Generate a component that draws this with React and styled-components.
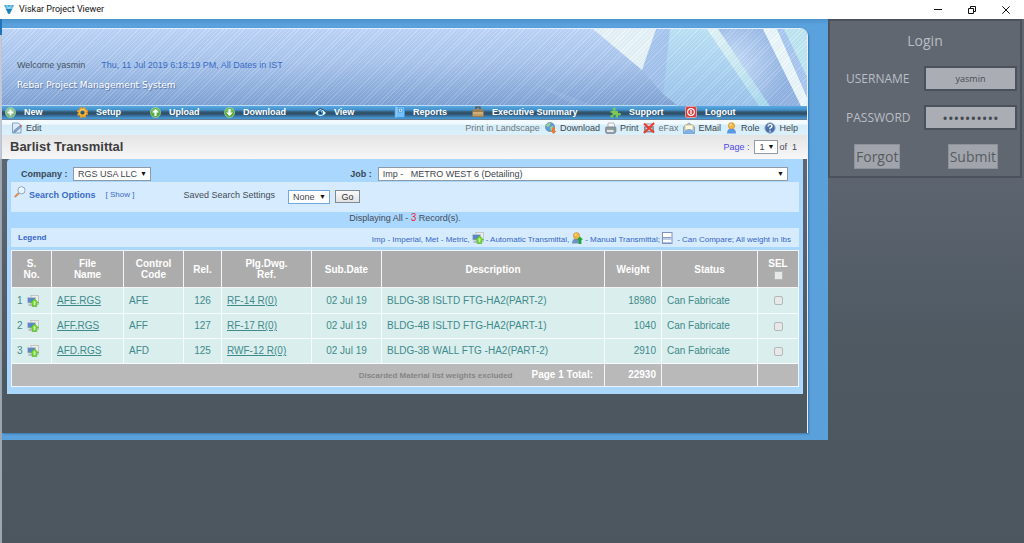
import React from "react";
import styled, { createGlobalStyle } from "styled-components";

const GlobalStyle = createGlobalStyle`
  * { box-sizing: border-box; }
  html, body { margin: 0; padding: 0; height: 100%; }
  #root { min-height: 100%; display: flex; flex-direction: column; }
  body { font-family: "Liberation Sans", Arial, sans-serif; font-size: 9px; color: #454b55; background: #4b575f; }
  button, input, select { font-family: inherit; font-size: inherit; margin: 0; }
  a { color: inherit; }
  svg { display: block; flex: none; }
`;

const TitleBar = styled.header`
  display: flex;
  align-items: center;
  height: 19px;
  padding: 0 9px 0 4px;
  background: #fff;
  color: #111;
  font-family: Roboto, "Open Sans", sans-serif;
  gap: 5px;
`;
const WindowTitle = styled.h1`
  flex: 1;
  margin: 0;
  font-size: 9px;
  font-weight: 400;
  line-height: 19px;
`;
const WindowButtons = styled.div`
  display: flex;
  gap: 22px;
  margin-right: 3px;
`;
const WindowButton = styled.button`
  border: 0;
  padding: 0;
  background: none;
  width: 12px;
  height: 16px;
  display: flex;
  align-items: center;
  justify-content: center;
`;

const Workspace = styled.div`
  flex: 1;
  display: flex;
  align-items: flex-start;
  background: linear-gradient(#5f6771 0, #5d6570 150px, #4e5962 330px, #4b565e 100%);
`;
const WindowEdge = styled.div`
  flex: none;
  align-self: stretch;
  width: 2px;
  background: linear-gradient(#1e74bb 0 16px, #c3cad6 16px 140px, #9ea6b2 140px);
`;
const Frame = styled.div`
  flex: 1;
  min-width: 0;
  padding: 9px 20px 7px 0;
  background: linear-gradient(#4c93cd, #5aa2dd 6px, #5aa0da);
`;
const Panel = styled.div`
  border-radius: 0 8px 0 0;
  overflow: hidden;
  border-right: 1px solid #e6eef8;
  background: linear-gradient(#5f6771 0, #5d6570 150px, #4c5760 350px);
  padding-bottom: 39px;
  box-shadow: 1px 1px 2px #3c78ab;
`;

const Banner = styled.div`
  position: relative;
  height: 77px;
  padding: 30px 15px 0;
  border-top: 1px solid #e3eefc;
  background: linear-gradient(#c0d6f8, #a9c5ec 45%, #80a3d4);
`;
const BannerArt = styled.svg`
  position: absolute;
  right: 0;
  top: 0;
`;
const BannerStripes = styled.div`
  position: absolute;
  inset: 0;
  background: repeating-linear-gradient(135deg, rgba(255, 255, 255, 0.14) 0 1px, rgba(90, 130, 190, 0.07) 1px 3px);
`;
const BannerText = styled.div`
  position: relative;
`;
const Welcome = styled.p`
  display: flex;
  gap: 16px;
  margin: 0;
  line-height: 12px;
  color: #4a5564;
`;
const ServerTime = styled.span`
  color: #3a6cc4;
`;
const Tagline = styled.p`
  margin: 8px 0 0;
  font-family: "DejaVu Sans", sans-serif;
  font-size: 9px;
  line-height: 12px;
  color: #fff;
  text-shadow: 1px 1px 1px #54719f;
`;

const Nav = styled.nav`
  display: grid;
  grid-template-columns: 72fr 73fr 74fr 91fr 79fr 78fr 138fr 75fr 122fr;
  align-items: center;
  height: 15px;
  padding-left: 3px;
  background: linear-gradient(#b9ddf8 0 1px, #5aa9e2 1px, #4290c9 5px, #34566f 7px, #2f4f68 9px, #3f87bd 12px, #4b9bd6);
  border-bottom: 1px solid #687f95;
`;
const NavLink = styled.a`
  display: flex;
  align-items: center;
  gap: 8px;
  color: #fff;
  font-weight: 700;
  line-height: 12px;
  text-decoration: none;
  white-space: nowrap;
`;

const Toolbar = styled.div`
  display: flex;
  align-items: center;
  height: 15px;
  padding: 0 9px;
  gap: 5px;
  color: #3c4650;
  background: linear-gradient(#f2fafd 0 4px, #d5edf8 5px, #dbf0fa);
`;
const ToolLink = styled.a`
  display: flex;
  align-items: center;
  gap: 3px;
  line-height: 12px;
  text-decoration: none;
  white-space: nowrap;
  color: ${(p) => (p.$muted ? "#6f7880" : "inherit")};
  margin-right: ${(p) => (p.$push ? "auto" : "0")};
`;

const PageHead = styled.div`
  display: flex;
  align-items: center;
  justify-content: space-between;
  height: 24px;
  padding: 0 10px 0 8px;
  background: linear-gradient(#e4e4e5, #f7f7f7);
`;
const PageTitle = styled.h2`
  margin: 0;
  font-size: 13px;
  line-height: 16px;
  color: #3d3d40;
`;
const Pager = styled.div`
  display: flex;
  align-items: center;
  gap: 1px;
`;
const PagerLabel = styled.label`
  margin-right: 4px;
  color: #4c4ae8;
`;

const Content = styled.main`
  margin: 0 4px 0 5px;
  padding: 1px 4px 7px;
  border-radius: 4px 0 0 0;
  background: #a9d7fe;
`;
const FilterRow = styled.div`
  display: flex;
  align-items: center;
  height: 22px;
  padding: 6px 11px 0 10px;
`;
const FilterLabel = styled.label`
  font-weight: 700;
  color: #3a4654;
  width: 52px;
  text-align: ${(p) => (p.$end ? "right" : "left")};
  margin-left: ${(p) => (p.$end ? "22%" : "0")};
  margin-right: ${(p) => (p.$end ? "6px" : "0")};
  white-space: nowrap;
`;
const SelectBox = styled.span`
  position: relative;
  display: ${(p) => (p.$fill ? "block" : "inline-block")};
  flex: ${(p) => (p.$fill ? "1" : "none")};
  width: ${(p) => (p.$width ? `${p.$width}px` : "auto")};
  &::after {
    content: "▼";
    position: absolute;
    right: 4px;
    top: 0;
    line-height: 13px;
    font-size: 7px;
    color: #111;
    pointer-events: none;
  }
`;
const Select = styled.select`
  appearance: none;
  display: block;
  width: 100%;
  height: 14px;
  padding: 0 12px 0 4px;
  border: 1px solid ${(p) => (p.$active ? "#6fa8dc" : "#8f9aa6")};
  border-radius: 0;
  background: #fff;
  color: #3f454c;
`;
const SearchBand = styled.div`
  display: flex;
  align-items: flex-start;
  min-height: 30px;
  padding: 4px 6px 4px 3px;
  background: #d6ebfe;
`;
const SearchTitle = styled.span`
  margin: 3px 0 0 3px;
  line-height: 12px;
  font-weight: 700;
  color: #3a6cc8;
`;
const ShowLink = styled.a`
  margin: 3px 0 0 10px;
  font-size: 8px;
  line-height: 12px;
  text-decoration: none;
  color: #3a6cc8;
`;
const SavedLabel = styled.label`
  margin: 3px 13px 0 49px;
  line-height: 12px;
`;
const SavedControls = styled.div`
  display: flex;
  gap: 5px;
  padding-top: 4px;
`;
const GoButton = styled.button`
  width: 25px;
  height: 13px;
  padding: 0;
  font-size: 9px;
  line-height: 10px;
  border: 1px solid #808a94;
  background: linear-gradient(#fafafa, #e2e2e2);
  color: #333;
`;
const RecordCount = styled.p`
  margin: 0;
  text-align: center;
  line-height: 11px;
  padding-bottom: 4px;
`;
const Count = styled.span`
  color: #f01f35;
  font-size: 10px;
`;
const Legend = styled.div`
  display: flex;
  align-items: center;
  justify-content: space-between;
  min-height: 19px;
  padding: 0 8px 0 7px;
  margin-bottom: 3px;
  font-size: 8px;
  color: #3565c5;
  background: #d6ebfe;
`;
const LegendKeys = styled.span`
  display: flex;
  align-items: center;
  gap: 2px;
  span { padding-top: 4px; }
`;

const Table = styled.table`
  width: 100%;
  table-layout: fixed;
  border-collapse: separate;
  border-spacing: 0;
  border: 1px solid #eef6fb;
  border-right-width: 0;
  font-size: 10px;
  color: #3f8a8b;
  background: #d9eeed;
`;
const Col = styled.col`
  width: ${(p) => (p.$w ? `${p.$w}px` : "auto")};
`;
const HeadCell = styled.th`
  height: 37px;
  padding: 0 4px;
  line-height: 11px;
  color: #fff;
  background: #acacac;
  border-right: 1px solid #f4f6f6;
  border-bottom: 1px solid #f4f6f6;
`;
const Cell = styled.td`
  height: ${(p) => (p.$short ? 25 : 26)}px;
  padding: 0 ${(p) => (p.$align === "center" ? 0 : 5)}px;
  line-height: 12px;
  text-align: ${(p) => p.$align || "left"};
  white-space: nowrap;
  border-right: 1px solid #f6fbfb;
  border-bottom: 1px solid #f6fbfb;
`;
const Numbered = styled.span`
  display: flex;
  align-items: flex-end;
  gap: 4px;
`;
const TotalCell = styled.td`
  height: 22px;
  padding: 0 ${(p) => (p.$label ? 11 : 5)}px;
  line-height: 12px;
  text-align: right;
  font-weight: 700;
  color: #fff;
  background: #b9b9b9;
  border-right: 1px solid #f4f6f6;
`;
const Note = styled.small`
  margin-right: 19px;
  font-size: 8px;
  color: #858585;
`;
const Check = styled.input`
  appearance: none;
  display: inline-block;
  vertical-align: middle;
  width: 9px;
  height: 9px;
  margin: 0;
  border: 1px solid #b3b8b8;
  border-radius: ${(p) => (p.$square ? 0 : 2)}px;
  background: #e8e8e8;
`;
const SelLabel = styled.label`
  display: flex;
  flex-direction: column;
  align-items: center;
  gap: 2px;
`;

const LoginBox = styled.form`
  flex: none;
  width: 194px;
  margin: 0 2px 0 0;
  padding: 10px 3px 7px 16px;
  border: 2px solid #4b525b;
  background: #606771;
  color: #b9bdc4;
  font-family: "Open Sans", "Noto Sans", sans-serif;
`;
const LoginTitle = styled.h2`
  margin: 0 13px 15px 0;
  text-align: center;
  font-size: 14px;
  font-weight: 400;
  line-height: 20px;
`;
const Field = styled.div`
  display: flex;
  align-items: center;
  justify-content: space-between;
  margin-bottom: 14px;
`;
const FieldLabel = styled.label`
  font-size: 12px;
  line-height: 16px;
`;
const TextBox = styled.input`
  width: 93px;
  height: 25px;
  padding: 0;
  border: 2px solid #4b525b;
  border-radius: 0;
  text-align: center;
  font-size: ${(p) => (p.type === "password" ? 15 : 9)}px;
  color: #464b52;
  background: #aaaeb4;
`;
const LoginActions = styled.div`
  display: flex;
  justify-content: space-between;
  padding: 0 19px 0 8px;
`;
const LoginButton = styled.button`
  height: 25px;
  padding: 0 1px;
  border: 1px solid #8d9199;
  font-size: 14px;
  line-height: 20px;
  color: #565b62;
  background: #a1a5ab;
`;

const Logo = () => (
  <svg width="10" height="10" viewBox="0 0 10 10" aria-hidden="true">
    <path d="M0 0h10L6 9H4z" fill="#4aaedb" />
    <path d="M2.500 0 5 3.500 7.500 0M1.200 3h7.600" fill="none" stroke="#d9f1fa" strokeWidth=".6" />
    <path d="M2 4h6L5 9z" fill="#1c7db8" />
  </svg>
);

const Orb = ({ children, color = "#4eae35" }) => (
  <svg width="11" height="11" viewBox="0 0 11 11" aria-hidden="true">
    <circle cx="5.500" cy="5.500" r="5" fill={color} stroke="#b9deb6" strokeWidth=".7" />
    <path d="M1.500 4a4.300 4.300 0 0 1 8 0q-4 2-8 0" fill="#fff" opacity=".25" />
    {children}
  </svg>
);

const navIcons = {
  New: (
    <Orb color="#78b77b"><path d="M5.500 2.500v6M2.500 5.500h6" stroke="#fff" strokeWidth="1.800" /></Orb>
  ),
  Setup: (
    <svg width="11" height="11" viewBox="0 0 11 11" aria-hidden="true">
      <circle cx="5.500" cy="5.500" r="4.400" fill="none" stroke="#f59a1b" strokeWidth="2.200" strokeDasharray="2.300 1.155" />
      <circle cx="5.500" cy="5.500" r="3.100" fill="none" stroke="#fbb52c" strokeWidth="1.900" />
      <path d="M3 4a3 3 0 0 1 4-1" fill="none" stroke="#ffe27a" strokeWidth=".8" />
    </svg>
  ),
  Upload: (
    <Orb><path d="M5.500 2 9 5.500H6.600V9H4.400V5.500H2z" fill="#fff" /></Orb>
  ),
  Download: (
    <Orb><path d="M5.500 9 2 5.500h2.400V2h2.200v3.500H9z" fill="#fff" /></Orb>
  ),
  View: (
    <svg width="11" height="11" viewBox="0 0 11 11" aria-hidden="true">
      <path d="M0 6q2.500-4 5.500-4T11 6Q8.500 9.300 5.500 9.300T0 6z" fill="#f3f7fa" />
      <path d="M0 5.500Q2.500 1.800 5.500 1.800T11 5.500" fill="none" stroke="#263b50" strokeWidth=".9" />
      <circle cx="5.500" cy="5.700" r="2.600" fill="#268ee0" />
      <circle cx="5.500" cy="5.700" r="1.200" fill="#102b48" />
      <circle cx="6.300" cy="4.800" r=".6" fill="#fff" />
    </svg>
  ),
  Reports: (
    <svg width="11" height="12" viewBox="0 0 11 12" aria-hidden="true">
      <rect x="1" y=".5" width="9.500" height="11" rx="1" fill="#74bff8" stroke="#3f97e0" />
      <path d="M2 .500v11" stroke="#c6e5ff" strokeDasharray="1 1" />
      <rect x="4.500" y="2.500" width="4" height="3.500" fill="#c7e7ff" stroke="#3f8fce" strokeWidth=".6" />
      <circle cx="6.500" cy="4.200" r=".8" fill="#3480c0" />
    </svg>
  ),
  "Executive Summary": (
    <svg width="12" height="12" viewBox="0 0 12 12" aria-hidden="true">
      <path d="M4 3V1h4v2" fill="none" stroke="#5b4a38" strokeWidth="1.200" />
      <path d="M1.500 3h9l1 3H.5z" fill="#9b805b" />
      <rect x=".5" y="5" width="11" height="6" rx=".8" fill="#c09a62" />
      <path d="M.5 5.500h11M.5 10.500h11" stroke="#806441" strokeWidth=".6" />
      <path d="M1 7h10" stroke="#e0c28f" />
    </svg>
  ),
  Support: (
    <svg width="11" height="11" viewBox="0 0 11 11" aria-hidden="true">
      <path d="M.5 4h3C2 1.500 3 .5 4.200.5S6.500 1.600 5.200 4H8v2.200C10 5 10.800 6 10.800 7.200S9.700 9 8 8v2.500H5.700C6.500 8.500 5.500 8 4.500 8S3 9 3.500 10.500h-3V8c2 .7 2-.2 2-1s-.5-1.500-2-1z" fill="#7bca50" />
    </svg>
  ),
  Logout: (
    <svg width="12" height="12" viewBox="0 0 12 12" aria-hidden="true">
      <rect x=".5" y=".5" width="11" height="11" rx="1.500" fill="#da3b3c" stroke="#f0b0ae" strokeWidth=".8" />
      <circle cx="6" cy="6" r="3.300" fill="none" stroke="#fff" strokeWidth="1.200" />
      <path d="M6 4v4" stroke="#fff" strokeWidth="1.300" />
    </svg>
  ),
};

const EditIcon = () => (
  <svg width="12" height="12" viewBox="0 0 12 12" aria-hidden="true">
    <path d="M1.500 1h6L10 3.500V11H1.500z" fill="#dceaf8" stroke="#6f8fb6" strokeWidth=".8" />
    <path d="M3 8.500 8.500 4l1.300 1.300L5 9.700l-2.300.8z" fill="#8eaacc" stroke="#47668e" strokeWidth=".5" />
    <path d="m8.500 3.500 1.300-1L11 4 9.800 5.200z" fill="#d75f52" />
  </svg>
);
const GlobeIcon = () => (
  <svg width="12" height="12" viewBox="0 0 12 12" aria-hidden="true">
    <circle cx="5" cy="5" r="4.600" fill="#5e9ed7" stroke="#56748f" strokeWidth=".5" />
    <path d="M2 2q2-1.500 3.500-1L5 3 3 5 1 4zM5 5l3-1 .5 3L6 9z" fill="#a3d18a" />
    <path d="M7 5.500h3V9h1.500l-3 3L5.700 9H7z" fill="#ee7838" />
  </svg>
);
const PrinterIcon = () => (
  <svg width="12" height="12" viewBox="0 0 12 12" aria-hidden="true">
    <path d="M3 1h6l1 4H3z" fill="#f4f5f7" stroke="#8c939b" strokeWidth=".6" />
    <path d="M1 5h9.500l.5 1v4L9.500 11.500h-8L.5 10V6z" fill="#949ca6" stroke="#606974" strokeWidth=".5" />
    <path d="M2 8h6.500v2H2z" fill="#e5e9ec" />
    <circle cx="8.800" cy="7" r=".8" fill="#55b743" />
  </svg>
);
const FaxIcon = () => (
  <svg width="12" height="12" viewBox="0 0 13 12" aria-hidden="true">
    <path d="M3 1h7v3h2v7H1V4h2z" fill="#8a9097" />
    <path d="M4 2h5v2H4zM3 6h7v3H3z" fill="#d7dde2" />
    <path d="m1 1 11 10M12 .500 1 11.500" stroke="#ee3a30" strokeWidth="2.200" />
  </svg>
);
const MailIcon = () => (
  <svg width="12" height="12" viewBox="0 0 12 12" aria-hidden="true">
    <path d="M.5 5 6 1l5.500 4v6.500H.5z" fill="#a9cdf1" stroke="#6490c4" strokeWidth=".7" />
    <path d="M2 3h8v4.500L6 9 2 7.500z" fill="#fff8dc" stroke="#d4a653" strokeWidth=".6" />
    <path d="m.7 11 4-3.500h2.600l4 3.500" fill="#82b2e8" stroke="#6290c6" strokeWidth=".6" />
  </svg>
);
const UserIcon = ({ arrow }) => (
  <svg width="12" height="12" viewBox="0 0 12 12" aria-hidden="true">
    <path d="M1 11.500q0-5 4.500-5t4.500 5z" fill={arrow ? "#6c93c6" : "#5c97df"} />
    <circle cx="5.500" cy="3.800" r="3.200" fill="#f3b647" stroke="#c58529" strokeWidth=".5" />
    <circle cx="4.600" cy="2.800" r="1" fill="#ffe4a4" />
    {arrow && <path d="m9 4.500 3 3.300h-1.600V12H7.700V7.800H6z" fill="#22a52c" />}
  </svg>
);
const HelpIcon = () => (
  <svg width="12" height="12" viewBox="0 0 12 12" aria-hidden="true">
    <circle cx="6" cy="6" r="5.200" fill="#486fac" stroke="#a5b5cb" />
    <path d="M4 4.500Q4 2.700 6 2.700t2 1.700Q8 5.300 6 6.200v1.100M6 8.400v1.300" fill="none" stroke="#fff" strokeWidth="1.300" />
  </svg>
);
const SearchIcon = () => (
  <svg width="12" height="12" viewBox="0 0 12 12" aria-hidden="true">
    <path d="m5 7-4.300 4" stroke="#d88b51" strokeWidth="1.800" />
    <circle cx="7.500" cy="4.300" r="3.600" fill="#e9f6ff" stroke="#829fc0" strokeWidth=".9" />
    <path d="M5.500 4q.3-2 2.200-2" fill="none" stroke="#fff" />
  </svg>
);
const AutoIcon = () => (
  <svg width="12" height="12" viewBox="0 0 12 12" aria-hidden="true">
    <path d="M3.500.5h8v9H9z" fill="#ededeb" stroke="#b4b8b8" strokeWidth=".7" />
    <path d="M.5 2.500h8v5.500h-8z" fill="#5c86cb" stroke="#c2c9cc" strokeWidth=".8" />
    <path d="M1.500 10h5" stroke="#a5adb0" strokeWidth="1.400" />
    <path d="M7.500 3.800 11.700 8H9.800v3.500H5.200V8H3.300z" fill="#6fd632" stroke="#55ad33" strokeWidth=".6" />
    <path d="M7.500 5.800 9 7.500H8.300v2.500H6.700V7.500H6z" fill="#c9f59d" />
  </svg>
);
const CompareIcon = () => (
  <svg width="11" height="12" viewBox="0 0 11 12" aria-hidden="true">
    <rect x=".5" y=".5" width="9.500" height="11" fill="#fff" stroke="#7d92bd" />
    <path d="M1 5.500h8.500M1 7h8.500" stroke="#849cc8" />
    <path d="M1 10.500h8.500" stroke="#a9c2e8" />
  </svg>
);

const BannerDrawing = () => (
  <BannerArt width="287" height="77" viewBox="-60 0 287 77" aria-hidden="true">
    <defs>
      <linearGradient id="sky" x1="0" y1="0" x2="0" y2="1">
        <stop offset="0" stopColor="#bfe5f6" />
        <stop offset="1" stopColor="#9cc4ec" />
      </linearGradient>
      <radialGradient id="glow" cx=".15" cy=".45" r=".7">
        <stop offset="0" stopColor="#cbe0fa" />
        <stop offset="1" stopColor="#93b4e2" />
      </radialGradient>
      <linearGradient id="ray" x1="0" y1="0" x2="1" y2="1">
        <stop offset="0" stopColor="#e8f7f6" />
        <stop offset=".5" stopColor="#ccebf3" />
        <stop offset="1" stopColor="#a8d9ee" />
      </linearGradient>
    </defs>
    <path d="M-50 52-4 77H15z" fill="#a8c6ec" opacity=".25" />
    <path d="M90 0h38l52 77H98L83 65z" fill="url(#sky)" />
    <path d="M76 0h14l-7 65-21-24z" fill="#a5c4ee" opacity=".8" />
    <path d="M13 0h63L62 41z" fill="#eaf6f8" />
    <path d="M138 0h45l38 77h-31z" fill="url(#glow)" />
    <path d="M127 0h11l52 77h-11z" fill="url(#ray)" />
    <path d="M183 0h14l30 68v9h-6z" fill="#eef9fb" />
    <path d="M197 0h7l23 48v20z" fill="#aac8f0" />
    <path d="M204 0h23v48z" fill="#c1e8f1" />
  </BannerArt>
);

const tools = [
  ["Download", <GlobeIcon />],
  ["Print", <PrinterIcon />],
  ["eFax", <FaxIcon />],
  ["EMail", <MailIcon />],
  ["Role", <UserIcon />],
  ["Help", <HelpIcon />],
];

const rows = [
  { file: "AFE.RGS", code: "AFE", rel: "126", ref: "RF-14 R(0)", date: "02 Jul 19", text: "BLDG-3B ISLTD FTG-HA2(PART-2)", weight: "18980" },
  { file: "AFF.RGS", code: "AFF", rel: "127", ref: "RF-17 R(0)", date: "02 Jul 19", text: "BLDG-4B ISLTD FTG-HA2(PART-1)", weight: "1040" },
  { file: "AFD.RGS", code: "AFD", rel: "125", ref: "RWF-12 R(0)", date: "02 Jul 19", text: "BLDG-3B WALL FTG -HA2(PART-2)", weight: "2910" },
];
const columnWidths = [40, 72, 60, 38, 90, 70, null, 57, 96, 41];

const Barlist = () => (
  <Table>
    <colgroup>
      {columnWidths.map((w, i) => <Col key={i} $w={w} />)}
    </colgroup>
    <thead>
      <tr>
        <HeadCell>S.<br />No.</HeadCell>
        <HeadCell>File<br />Name</HeadCell>
        <HeadCell>Control<br />Code</HeadCell>
        <HeadCell>Rel.</HeadCell>
        <HeadCell>Plg.Dwg.<br />Ref.</HeadCell>
        <HeadCell>Sub.Date</HeadCell>
        <HeadCell>Description</HeadCell>
        <HeadCell>Weight</HeadCell>
        <HeadCell>Status</HeadCell>
        <HeadCell><SelLabel>SEL<Check type="checkbox" $square /></SelLabel></HeadCell>
      </tr>
    </thead>
    <tbody>
      {rows.map((r, i) => {
        const short = i > 0;
        return (
          <tr key={r.file}>
            <Cell $short={short}><Numbered>{i + 1}<AutoIcon /></Numbered></Cell>
            <Cell $short={short}><a href="#file">{r.file}</a></Cell>
            <Cell $short={short}>{r.code}</Cell>
            <Cell $short={short} $align="center">{r.rel}</Cell>
            <Cell $short={short}><a href="#drawing">{r.ref}</a></Cell>
            <Cell $short={short} $align="center">{r.date}</Cell>
            <Cell $short={short}>{r.text}</Cell>
            <Cell $short={short} $align="right">{r.weight}</Cell>
            <Cell $short={short}>Can Fabricate</Cell>
            <Cell $short={short} $align="center"><Check type="checkbox" aria-label={`Select ${r.file}`} /></Cell>
          </tr>
        );
      })}
    </tbody>
    <tfoot>
      <tr>
        <TotalCell colSpan={7} $label><Note>Discarded Material list weights excluded</Note>Page 1 Total:</TotalCell>
        <TotalCell>22930</TotalCell>
        <TotalCell />
        <TotalCell />
      </tr>
    </tfoot>
  </Table>
);

export default function App() {
  return (
    <>
      <GlobalStyle />
      <TitleBar>
        <Logo />
        <WindowTitle>Viskar Project Viewer</WindowTitle>
        <WindowButtons>
          <WindowButton aria-label="Minimize">
            <svg width="8" height="8" viewBox="0 0 8 8"><path d="M0 3.500h8" stroke="#111" /></svg>
          </WindowButton>
          <WindowButton aria-label="Restore">
            <svg width="8" height="8" viewBox="0 0 8 8" fill="none" stroke="#111"><path d="M.5 2.500h5v5h-5zM2.500 2.500v-2h5v5h-2" /></svg>
          </WindowButton>
          <WindowButton aria-label="Close">
            <svg width="8" height="8" viewBox="0 0 8 8"><path d="m.300.300 7.400 7.400M7.700.300.300 7.700" stroke="#111" /></svg>
          </WindowButton>
        </WindowButtons>
      </TitleBar>
      <Workspace>
        <WindowEdge />
        <Frame>
          <Panel>
            <Banner>
              <BannerDrawing />
              <BannerStripes />
              <BannerText>
                <Welcome>Welcome yasmin<ServerTime>Thu, 11 Jul 2019 6:18:19 PM, All Dates in IST</ServerTime></Welcome>
                <Tagline>Rebar Project Management System</Tagline>
              </BannerText>
            </Banner>
            <Nav>
              {Object.entries(navIcons).map(([name, icon]) => (
                <NavLink key={name} href={`#${name}`}>{icon}{name}</NavLink>
              ))}
            </Nav>
            <Toolbar>
              <ToolLink href="#edit" $push><EditIcon />Edit</ToolLink>
              <ToolLink href="#landscape" $muted>Print in Landscape</ToolLink>
              {tools.map(([name, icon]) => (
                <ToolLink key={name} href={`#${name}`} $muted={name === "eFax"}>{icon}{name}</ToolLink>
              ))}
            </Toolbar>
            <PageHead>
              <PageTitle>Barlist Transmittal</PageTitle>
              <Pager>
                <PagerLabel htmlFor="page">Page :</PagerLabel>
                <SelectBox $width={24}><Select id="page"><option>1</option></Select></SelectBox>
                <span>of &nbsp;1</span>
              </Pager>
            </PageHead>
            <Content>
              <FilterRow>
                <FilterLabel htmlFor="company">Company :</FilterLabel>
                <SelectBox $width={78}><Select id="company"><option>RGS USA LLC</option></Select></SelectBox>
                <FilterLabel htmlFor="job" $end>Job :</FilterLabel>
                <SelectBox $fill><Select id="job"><option>Imp - &nbsp; METRO WEST 6 (Detailing)</option></Select></SelectBox>
              </FilterRow>
              <SearchBand>
                <SearchIcon />
                <SearchTitle>Search Options</SearchTitle>
                <ShowLink href="#show">[ Show ]</ShowLink>
                <SavedLabel htmlFor="saved">Saved Search Settings</SavedLabel>
                <SavedControls>
                  <SelectBox $width={42}><Select id="saved" $active><option>None</option></Select></SelectBox>
                  <GoButton type="button">Go</GoButton>
                </SavedControls>
              </SearchBand>
              <RecordCount>Displaying All - <Count>3</Count> Record(s).</RecordCount>
              <Legend>
                <strong>Legend</strong>
                <LegendKeys>
                  <span>Imp - Imperial, Met - Metric,</span><AutoIcon />
                  <span>- Automatic Transmittal,</span><UserIcon arrow />
                  <span>- Manual Transmittal;</span><CompareIcon />
                  <span>&nbsp;- Can Compare; All weight in lbs</span>
                </LegendKeys>
              </Legend>
              <Barlist />
            </Content>
          </Panel>
        </Frame>
        <LoginBox onSubmit={(e) => e.preventDefault()}>
          <LoginTitle>Login</LoginTitle>
          <Field>
            <FieldLabel htmlFor="username">USERNAME</FieldLabel>
            <TextBox id="username" type="text" defaultValue="yasmin" />
          </Field>
          <Field>
            <FieldLabel htmlFor="password">PASSWORD</FieldLabel>
            <TextBox id="password" type="password" defaultValue="0123456789" />
          </Field>
          <LoginActions>
            <LoginButton type="button">Forgot</LoginButton>
            <LoginButton type="submit">Submit</LoginButton>
          </LoginActions>
        </LoginBox>
      </Workspace>
    </>
  );
}
